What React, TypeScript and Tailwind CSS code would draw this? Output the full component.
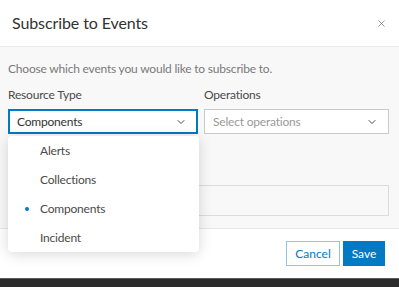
import { ChevronDown, X } from 'lucide-react';

const options = ['Alerts', 'Collections', 'Components', 'Incident'];

function App() {
  const selected = 'Components';

  return (
    <div className="w-[399px] h-[287px] flex flex-col bg-white overflow-hidden text-[#323232]" style={{ fontFamily: 'Lato, "Open Sans", sans-serif' }}>
      {/* header */}
      <div className="h-[47px] shrink-0 flex items-center justify-between pl-3 pr-[12px] border-b border-[#ececec]">
        <h1 className="text-[16px] leading-none tracking-[-0.1px]">Subscribe to Events</h1>
        <X size={11} strokeWidth={1.5} className="text-[#6a6a6a]" />
      </div>

      {/* body */}
      <div className="relative h-[181px] shrink-0 bg-[#f8f8f8] px-2 pt-[14px] text-[12px] tracking-[-0.2px]">
        <p className="leading-4 text-[#7a7a7a]">Choose which events you would like to subscribe to.</p>

        <div className="mt-[10px] flex gap-[6px]">
          <div className="w-[190px]">
            <label className="block leading-4 text-[#4a4a4a] mb-[6px]">Resource Type</label>
            <div className="h-[25px] flex items-center justify-between pl-2 pr-[10px] bg-white border border-[#007ac2] ring-1 ring-inset ring-[#007ac2]">
              <span className="text-[#323232]">{selected}</span>
              <ChevronDown size={12} strokeWidth={2} className="text-[#4a4a4a]" />
            </div>
          </div>
          <div className="w-[185px]">
            <label className="block leading-4 text-[#4a4a4a] mb-[6px]">Operations</label>
            <div className="h-[25px] flex items-center justify-between pl-2 pr-[10px] bg-white border border-[#cacaca]">
              <span className="text-[#9a9a9a]">Select operations</span>
              <ChevronDown size={12} strokeWidth={2} className="text-[#4a4a4a]" />
            </div>
          </div>
        </div>

        {/* field hidden beneath the open menu */}
        <div className="mt-[51px] h-[31px] w-[381px] bg-[#f8f8f8] border border-[#dcdcdc]" />

        {/* open select menu */}
        <ul className="absolute left-2 top-[89px] w-[191px] bg-white rounded-sm shadow-[0_2px_14px_rgba(0,0,0,0.16)]">
          {options.map((o) => (
            <li key={o} className="h-[29px] flex items-center text-[#4a4a4a]">
              <span className="w-8 flex justify-center">
                {o === selected && <span className="block w-[4px] h-[4px] rounded-full bg-[#007ac2] ml-[6px]" />}
              </span>
              <span>{o}</span>
            </li>
          ))}
        </ul>
      </div>

      {/* footer */}
      <div className="h-[50px] shrink-0 flex items-center justify-end gap-[3px] pr-[14px] border-t border-[#e6e6e6] text-[12px]">
        <button className="h-[25px] w-[54px] text-[#007ac2] bg-white border border-[#8ec3e6]">Cancel</button>
        <button className="h-[25px] w-[42px] text-white bg-[#007ac2] border border-[#007ac2]">Save</button>
      </div>

      <div className="flex-1 bg-[#2b2b2b] border-t border-[#5a5a5a]" />
    </div>
  );
}

export default App;
